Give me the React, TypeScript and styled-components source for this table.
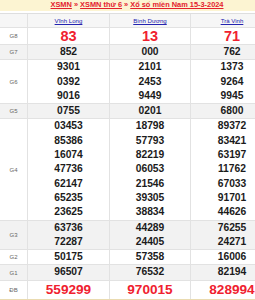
import React from "react";
import styled, { createGlobalStyle } from "styled-components";

const GlobalStyle = createGlobalStyle`
  html, body {
    margin: 0;
    padding: 0;
    overflow: hidden;
    background: #fff;
  }
  body {
    font-family: "Liberation Sans", Arial, sans-serif;
  }
`;

const Page = styled.div`
  width: 255px;
`;

const Breadcrumb = styled.div`
  height: 11px;
  padding-left: 19px;
  background: #fcf4d2;
  text-align: center;
  font-size: 7.4px;
  font-weight: 700;
  line-height: 9px;
  color: #e3212d;
  margin-bottom: 2px;
  white-space: nowrap;
`;

const Crumb = styled.a`
  color: #e3212d;
  text-decoration: underline;
`;

const Table = styled.div`
  border-top: 1px solid #dedede;
  border-bottom: 2px solid #eadbb0;
`;

const Row = styled.div<{ $shade?: boolean; $head?: boolean }>`
  display: grid;
  grid-template-columns: 28px 82px 81px 64px;
  background: ${(p) => (p.$head ? "#f6f6f6" : p.$shade ? "#f2f2f2" : "#fff")};
  border-bottom: 1px solid #e2e2e2;
  &:last-child {
    border-bottom: 0;
  }
`;

const Cell = styled.div<{ $h?: number }>`
  display: flex;
  flex-direction: column;
  align-items: center;
  justify-content: center;
  border-right: 1px solid #e2e2e2;
  min-height: ${(p) => (p.$h ? `${p.$h}px` : "auto")};
  &:last-child {
    border-right: 0;
    padding-left: 18px;
  }
`;

const Label = styled.span`
  font-size: 6px;
  color: #666;
`;

const Province = styled.a`
  font-size: 6.1px;
  color: #2323b0;
  text-decoration: underline;
  line-height: 13px;
`;

const Num = styled.span<{ $size?: number }>`
  font-weight: 700;
  font-size: ${(p) => (p.$size ? `${p.$size}px` : "10.3px")};
  line-height: ${(p) => (p.$size ? "16px" : "14.3px")};
  color: ${(p) => (p.$size ? "#f0212f" : "#1b1b1b")};
  white-space: nowrap;
`;

type Prize = { label: string; values: string[][]; size?: number; shade?: boolean; h?: number };

const provinces = ["Vĩnh Long", "Bình Dương", "Trà Vinh"];

const prizes: Prize[] = [
  { label: "G8", values: [["83"], ["13"], ["71"]], size: 14.5, h: 16 },
  { label: "G7", values: [["852"], ["000"], ["762"]], shade: true },
  {
    label: "G6",
    values: [
      ["9301", "0392", "9016"],
      ["2101", "2453", "9449"],
      ["1373", "9264", "9945"],
    ],
  },
  { label: "G5", values: [["0755"], ["0201"], ["6800"]], shade: true },
  {
    label: "G4",
    values: [
      ["03453", "85386", "16074", "47736", "62147", "65235", "23625"],
      ["18798", "57793", "82219", "06053", "21546", "39305", "38834"],
      ["89372", "83421", "63197", "11762", "67033", "91701", "44626"],
    ],
  },
  {
    label: "G3",
    values: [
      ["63736", "72287"],
      ["44289", "24405"],
      ["76255", "24271"],
    ],
    shade: true,
  },
  { label: "G2", values: [["50175"], ["57358"], ["16006"]] },
  { label: "G1", values: [["96507"], ["76532"], ["82194"]], shade: true },
  { label: "ĐB", values: [["559299"], ["970015"], ["828994"]], size: 13.6, h: 18 },
];

export default function App() {
  return (
    <Page>
      <GlobalStyle />
      <Breadcrumb>
        <Crumb>XSMN</Crumb> » <Crumb>XSMN thứ 6</Crumb> » <Crumb>Xổ số miền Nam 15-3-2024</Crumb>
      </Breadcrumb>
      <Table>
        <Row $head>
          <Cell />
          {provinces.map((p) => (
            <Cell key={p}>
              <Province>{p}</Province>
            </Cell>
          ))}
        </Row>
        {prizes.map((prize) => (
          <Row key={prize.label} $shade={prize.shade}>
            <Cell>
              <Label>{prize.label}</Label>
            </Cell>
            {prize.values.map((col, i) => (
              <Cell key={i} $h={prize.h}>
                {col.map((v, j) => (
                  <Num key={j} $size={prize.size}>
                    {v}
                  </Num>
                ))}
              </Cell>
            ))}
          </Row>
        ))}
      </Table>
    </Page>
  );
}
